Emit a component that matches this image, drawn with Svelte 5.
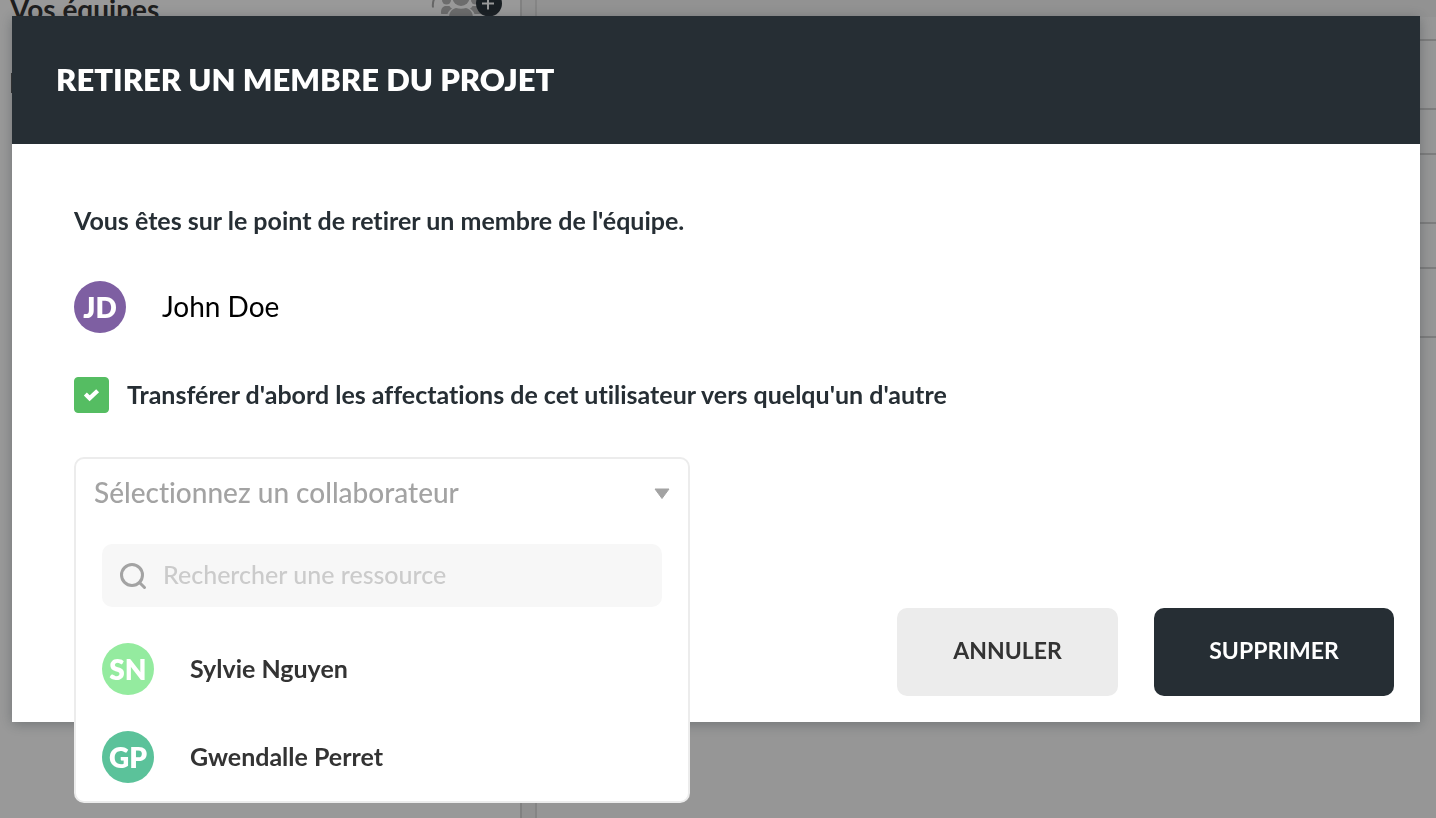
<!-- Confirmation modal shown before a member is removed from a project. -->

<script>
	let transfer = $state(true);
	let selected = $state('');
	let search = $state('');

	const member = { name: 'John Doe', initials: 'JD', color: '#7e5fa2' };

	const people = [
		{ name: 'Sylvie Nguyen', initials: 'SN', color: '#94eb9f' },
		{ name: 'Gwendalle Perret', initials: 'GP', color: '#5bc29a' }
	];

	let results = $derived(
		people.filter((p) => p.name.toLowerCase().includes(search.toLowerCase()))
	);
</script>

<div class="page">
	<aside>
		<div class="teams">
			<h2>Vos équipes</h2>
			<button class="add" aria-label="Ajouter une équipe">
				<svg width="74" height="32" viewBox="0 0 74 32">
					<path d="M5 19.500c-.5-4 0-8 3-11" fill="none" stroke="#aaa" stroke-width="2" />
					<g fill="#b4b4b4">
						<circle cx="18.500" cy="12" r="4.500" />
						<circle cx="47.500" cy="12" r="4.500" />
						<circle cx="33" cy="9.500" r="8.500" />
						<path d="M13 25c0-5 2-7 5-7h3.500c1 1.500 1.500 2 2.500 2.500-2.500 1.500-3.500 3-4.500 5.500H14.500c-1 0-1.500 0-1.500-1z" />
						<path d="M53 25c0-5-2-7-5-7h-3.500c-1 1.500-1.500 2-2.500 2.500 2.500 1.500 3.500 3 4.500 5.500h5c1 0 1.500 0 1.500-1z" />
						<path d="M21 30c0-6 3-9 7-10 3 1 7 1 10 0 4 1 7 4 7 10z" />
					</g>
					<circle cx="61" cy="15.500" r="13" fill="#2b343b" />
					<path d="M54 15.500h12M60 9.500v12" stroke="#fff" stroke-width="2" />
				</svg>
			</button>
		</div>
		<div class="marker"></div>
	</aside>
	<div class="splitter"></div>
	<main>
		<div class="toolbar"></div>
		<div class="line first"></div>
		<div class="line tall"></div>
		<div class="line"></div>
		<div class="line tall"></div>
		<div class="line"></div>
		<div class="line tall"></div>
	</main>
</div>

{#snippet avatar(person)}
	<span class="avatar" style="background-color: {person.color}">{person.initials}</span>
{/snippet}

<div class="overlay">
	<div class="modal" role="dialog" aria-modal="true" aria-labelledby="modal-title">
		<header>
			<h1 id="modal-title">RETIRER UN MEMBRE DU PROJET</h1>
		</header>

		<div class="content">
			<p>Vous êtes sur le point de retirer un membre de l'équipe.</p>

			<div class="member">
				{@render avatar(member)}
				<span class="name">{member.name}</span>
			</div>

			<label class="transfer">
				<input type="checkbox" bind:checked={transfer} />
				<span class="name">Transférer d'abord les affectations de cet utilisateur vers quelqu'un d'autre</span>
			</label>

			<div class="picker">
				<div class="dropdown">
					<div class="trigger">
						<select bind:value={selected} aria-label="Collaborateur">
							<option value="">Sélectionnez un collaborateur</option>
							{#each people as person}
								<option value={person.name}>{person.name}</option>
							{/each}
						</select>
						<svg class="caret" width="16" height="12" viewBox="0 0 16 12">
							<path d="M1 1h14L8 10.500z" fill="#a3a3a3" stroke="#a3a3a3" stroke-linejoin="round" />
						</svg>
					</div>

					<label class="search">
						<svg width="28" height="28" viewBox="0 0 28 28" fill="none" stroke="#a3a3a3" stroke-width="3" stroke-linecap="round">
							<circle cx="13" cy="13" r="10.500" />
							<path d="M20.500 20.500l5 5" />
						</svg>
						<input type="text" placeholder="Rechercher une ressource" aria-label="Rechercher une ressource" bind:value={search} />
					</label>

					<ul>
						{#each results as person}
							<li>
								<button onclick={() => (selected = person.name)}>
									{@render avatar(person)}
									<span class="name">{person.name}</span>
								</button>
							</li>
						{/each}
					</ul>
				</div>
			</div>
		</div>

		<footer>
			<button class="cancel">ANNULER</button>
			<button class="confirm">SUPPRIMER</button>
		</footer>
	</div>
</div>

<style>
	:global(body) {
		margin: 0;
		overflow: hidden;
		font-family: Lato, "Liberation Sans", sans-serif;
		font-variant-ligatures: none;
	}

	* {
		box-sizing: border-box;
	}

	h1, h2, p, ul {
		margin: 0;
		padding: 0;
	}

	button, input, select {
		font-family: inherit;
		font-variant-ligatures: inherit;
		border: none;
		outline: none;
	}

	button {
		cursor: pointer;
	}

	/* the page behind the modal */
	.page {
		display: grid;
		grid-template-columns: 520px 17px 1fr;
		height: 100vh;
		overflow: hidden;
		background-color: #fafafa;
	}

	aside {
		background-color: #fff;
	}

	.teams {
		display: flex;
		justify-content: space-between;
		height: 20px;
		padding: 0 18px 0 10px;
	}

	h2 {
		font-size: 28px;
		line-height: 18px;
		font-weight: 700;
		color: #333;
	}

	.add {
		height: 32px;
		padding: 0;
		margin-top: -12px;
		background: none;
	}

	.add svg {
		display: block;
	}

	.marker {
		width: 12px;
		height: 20px;
		margin-top: 53px;
		border-right: 1px solid #555;
	}

	.splitter {
		background-color: #f2f2f2;
		border-left: 2px solid #d8d8d8;
		border-right: 2px solid #dedede;
	}

	.toolbar {
		height: 17px;
		background-color: #f4f4f4;
	}

	.line {
		height: 45px;
		border-bottom: 2px solid #d0d0d0;
	}

	.line.first {
		height: 24px;
	}

	.line.tall {
		height: 69px;
	}

	/* modal */
	.overlay {
		position: fixed;
		inset: 0;
		padding: 16px 16px 16px 12px;
		background-color: rgba(0, 0, 0, 0.4);
	}

	.modal {
		background-color: #fff;
		box-shadow: 0 2px 12px rgba(37, 45, 51, 0.35);
	}

	header {
		display: flex;
		align-items: center;
		height: 128px;
		padding: 0 44px 2px;
		background-color: #262e34;
	}

	h1 {
		font-size: 31px;
		line-height: 40px;
		font-weight: 800;
		color: #fff;
	}

	.content {
		padding: 60px 62px 0;
	}

	p {
		font-size: 25px;
		line-height: 32px;
		font-weight: 700;
		color: #262e34;
	}

	.member {
		display: flex;
		align-items: center;
		gap: 36px;
		margin-top: 45px;
		font-size: 28px;
		color: #000;
	}

	.name {
		padding-bottom: 2px;
	}

	.avatar {
		display: flex;
		flex-shrink: 0;
		align-items: center;
		justify-content: center;
		width: 52px;
		height: 52px;
		border-radius: 50%;
		font-size: 28px;
		font-weight: 800;
		color: #fff;
	}

	.transfer {
		display: flex;
		align-items: center;
		gap: 18px;
		margin-top: 44px;
		font-size: 25px;
		font-weight: 700;
		line-height: 34px;
		color: #262e34;
	}

	.transfer input {
		appearance: none;
		flex-shrink: 0;
		width: 35px;
		height: 36px;
		margin: 0;
		border-radius: 4px;
		border: 1px solid #55bd62;
	}

	.transfer input:checked {
		background: #55bd62 url("data:image/svg+xml,%3Csvg xmlns='http://www.w3.org/2000/svg' viewBox='0 0 18 14'%3E%3Cpath d='M2.500 6l4.500 4.500L15.500 2.500' fill='none' stroke='white' stroke-width='4.500'/%3E%3C/svg%3E") center / 17px 14px no-repeat;
	}

	.picker {
		position: relative;
		width: 616px;
		max-width: 100%;
		height: 70px;
		margin-top: 44px;
	}

	/* opens over the bottom edge of the modal */
	.dropdown {
		position: absolute;
		top: 0;
		left: 0;
		width: 100%;
		padding-bottom: 18px;
		border: 2px solid #ececec;
		border-radius: 10px;
		background-color: #fff;
	}

	.trigger {
		display: grid;
		align-items: center;
		padding: 0 18px;
	}

	.trigger > * {
		grid-area: 1 / 1;
	}

	select {
		appearance: none;
		width: 100%;
		height: 69px;
		padding: 0 32px 4px 0;
		background: none;
		font-size: 28px;
		font-weight: 500;
		color: #a3a3a3;
	}

	.caret {
		justify-self: end;
		pointer-events: none;
	}

	.search {
		display: flex;
		align-items: center;
		gap: 16px;
		height: 63px;
		margin: 16px 26px 0;
		padding: 0 17px;
		border-radius: 10px;
		background-color: #f7f7f7;
	}

	.search input {
		flex: 1;
		min-width: 0;
		padding: 0 0 4px;
		background: none;
		font-size: 25px;
		font-weight: 500;
		color: #333;
	}

	.search input::placeholder {
		color: #cbcbcb;
	}

	ul {
		display: grid;
		gap: 36px;
		margin: 36px 26px 0;
		list-style: none;
	}

	li button {
		display: flex;
		align-items: center;
		gap: 36px;
		width: 100%;
		padding: 0;
		background: none;
		font-size: 25px;
		font-weight: 700;
		color: #333;
	}

	footer {
		display: flex;
		justify-content: flex-end;
		gap: 36px;
		padding: 81px 26px 26px;
	}

	footer button {
		height: 88px;
		padding: 0 0 4px;
		border-radius: 10px;
		font-size: 23px;
		font-weight: 700;
	}

	.cancel {
		width: 221px;
		background-color: #ececec;
		color: #333;
	}

	.confirm {
		width: 240px;
		background-color: #262e34;
		color: #fff;
	}
</style>
